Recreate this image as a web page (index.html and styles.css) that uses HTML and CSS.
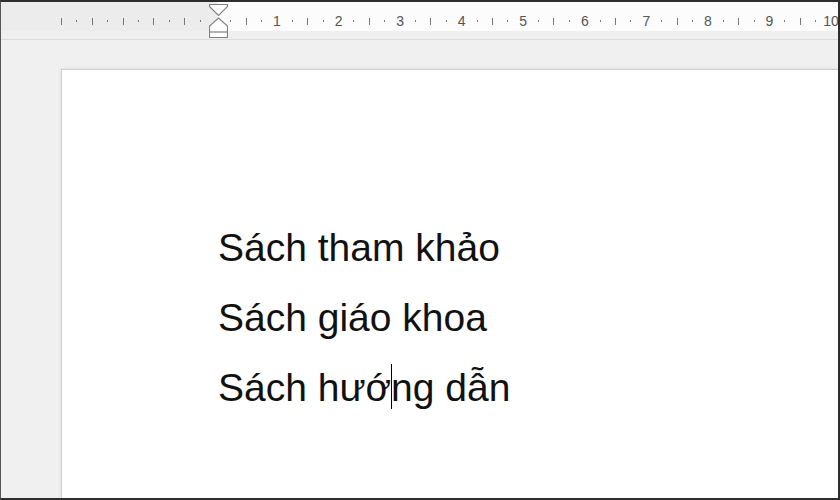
FILE: index.html
```html
<!DOCTYPE html>
<html lang="vi">
<head>
    <meta charset="UTF-8">
    <meta name="viewport" content="width=device-width, initial-scale=1.0">
    <title>Tài liệu</title>
    <link rel="stylesheet" href="styles.css">
</head>
<body>

    <!-- thước ngang -->
    <div class="ruler">
        <div class="ticks">
            <span class="cell"><i class="line"></i></span>
            <span class="cell"><i class="dot"></i></span>
            <span class="cell"><i class="line"></i></span>
            <span class="cell"><i class="dot"></i></span>
            <span class="cell"><i class="line"></i></span>
            <span class="cell"><i class="dot"></i></span>
            <span class="cell"><i class="line"></i></span>
            <span class="cell"><i class="dot"></i></span>
            <span class="cell"><i class="line"></i></span>
            <span class="cell"><i class="dot"></i></span>
            <span class="cell"></span>
            <span class="cell"><i class="dot"></i></span>
            <span class="cell"><i class="line"></i></span>
            <span class="cell"><i class="dot"></i></span>
            <span class="cell num">1</span>
            <span class="cell"><i class="dot"></i></span>
            <span class="cell"><i class="line"></i></span>
            <span class="cell"><i class="dot"></i></span>
            <span class="cell num">2</span>
            <span class="cell"><i class="dot"></i></span>
            <span class="cell"><i class="line"></i></span>
            <span class="cell"><i class="dot"></i></span>
            <span class="cell num">3</span>
            <span class="cell"><i class="dot"></i></span>
            <span class="cell"><i class="line"></i></span>
            <span class="cell"><i class="dot"></i></span>
            <span class="cell num">4</span>
            <span class="cell"><i class="dot"></i></span>
            <span class="cell"><i class="line"></i></span>
            <span class="cell"><i class="dot"></i></span>
            <span class="cell num">5</span>
            <span class="cell"><i class="dot"></i></span>
            <span class="cell"><i class="line"></i></span>
            <span class="cell"><i class="dot"></i></span>
            <span class="cell num">6</span>
            <span class="cell"><i class="dot"></i></span>
            <span class="cell"><i class="line"></i></span>
            <span class="cell"><i class="dot"></i></span>
            <span class="cell num">7</span>
            <span class="cell"><i class="dot"></i></span>
            <span class="cell"><i class="line"></i></span>
            <span class="cell"><i class="dot"></i></span>
            <span class="cell num">8</span>
            <span class="cell"><i class="dot"></i></span>
            <span class="cell"><i class="line"></i></span>
            <span class="cell"><i class="dot"></i></span>
            <span class="cell num">9</span>
            <span class="cell"><i class="dot"></i></span>
            <span class="cell"><i class="line"></i></span>
            <span class="cell"><i class="dot"></i></span>
            <span class="cell num">10</span>
        </div>

        <!-- con trỏ thụt lề -->
        <svg class="indent-marker" width="19" height="35" viewBox="0 0 19 35">
            <path d="M0.5 0.5 H18.5 V2.5 L9.5 11.5 L0.5 2.5 Z" fill="#fff" stroke="#808080" stroke-width="1.2"/>
            <path d="M9.5 14 L18.5 22 V33.5 H0.5 V22 Z" fill="#fff" stroke="#808080" stroke-width="1.2"/>
            <path d="M0.5 28 H18.5" stroke="#808080" stroke-width="1.2"/>
        </svg>
    </div>

    <div class="workspace">
        <div class="page">
            <p>Sách tham khảo</p>
            <p>Sách giáo khoa</p>
            <p>Sách hướ<span class="caret"></span>ng dẫn</p>
        </div>
    </div>

</body>
</html>
```

FILE: styles.css
```css
/* giao diện trang soạn thảo */
html, body {
    margin: 0;
    height: 100%;
}
body {
    box-sizing: border-box;
    width: 840px;
    height: 500px;
    overflow: hidden;
    background-color: #f0f0f0;
    border-top: 2px solid #2e2e2e;
    border-left: 1px solid #555;
    border-right: 2px solid #2e2e2e;
    border-bottom: 2px solid #2e2e2e;
    display: flex;
    flex-direction: column;
    font-family: 'Liberation Sans', Arial, sans-serif;
}
.ruler {
    position: relative;
    height: 37px;
    flex-shrink: 0;
    background:
        linear-gradient(to right, #ececec 216px, #fcfcfc 216px) top left / 100% 29px no-repeat,
        #efefef;
    border-bottom: 1px solid #dcdcdc;
}
.ticks {
    display: flex;
    height: 38px;
    margin-left: 52.8px;
}
.cell {
    flex: 0 0 15.4px;
    display: flex;
    align-items: center;
    justify-content: center;
    font-size: 14px;
    color: #555;
    white-space: nowrap;
}
.line {
    display: block;
    width: 1px;
    height: 7px;
    background-color: #777;
}
.dot {
    display: block;
    width: 1px;
    height: 2px;
    background-color: #777;
}
.indent-marker {
    position: absolute;
    left: 208px;
    top: 2px;
}
.workspace {
    flex: 1;
    display: flex;
    padding: 29px 0 0 60px;
    min-height: 0;
}
.page {
    flex: 1;
    background-color: #ffffff;
    border-top: 1px solid #cfcfcf;
    border-left: 1px solid #cfcfcf;
    box-shadow: -1px -1px 2px rgba(0, 0, 0, 0.06);
    padding: 143px 0 0 156px;
}
.page p {
    margin: 0;
    font-size: 39px;
    line-height: 70px;
    color: #111;
}
.caret {
    display: inline-block;
    width: 1px;
    height: 45px;
    margin-right: -1px;
    background-color: #000;
    vertical-align: -8px;
}
```
